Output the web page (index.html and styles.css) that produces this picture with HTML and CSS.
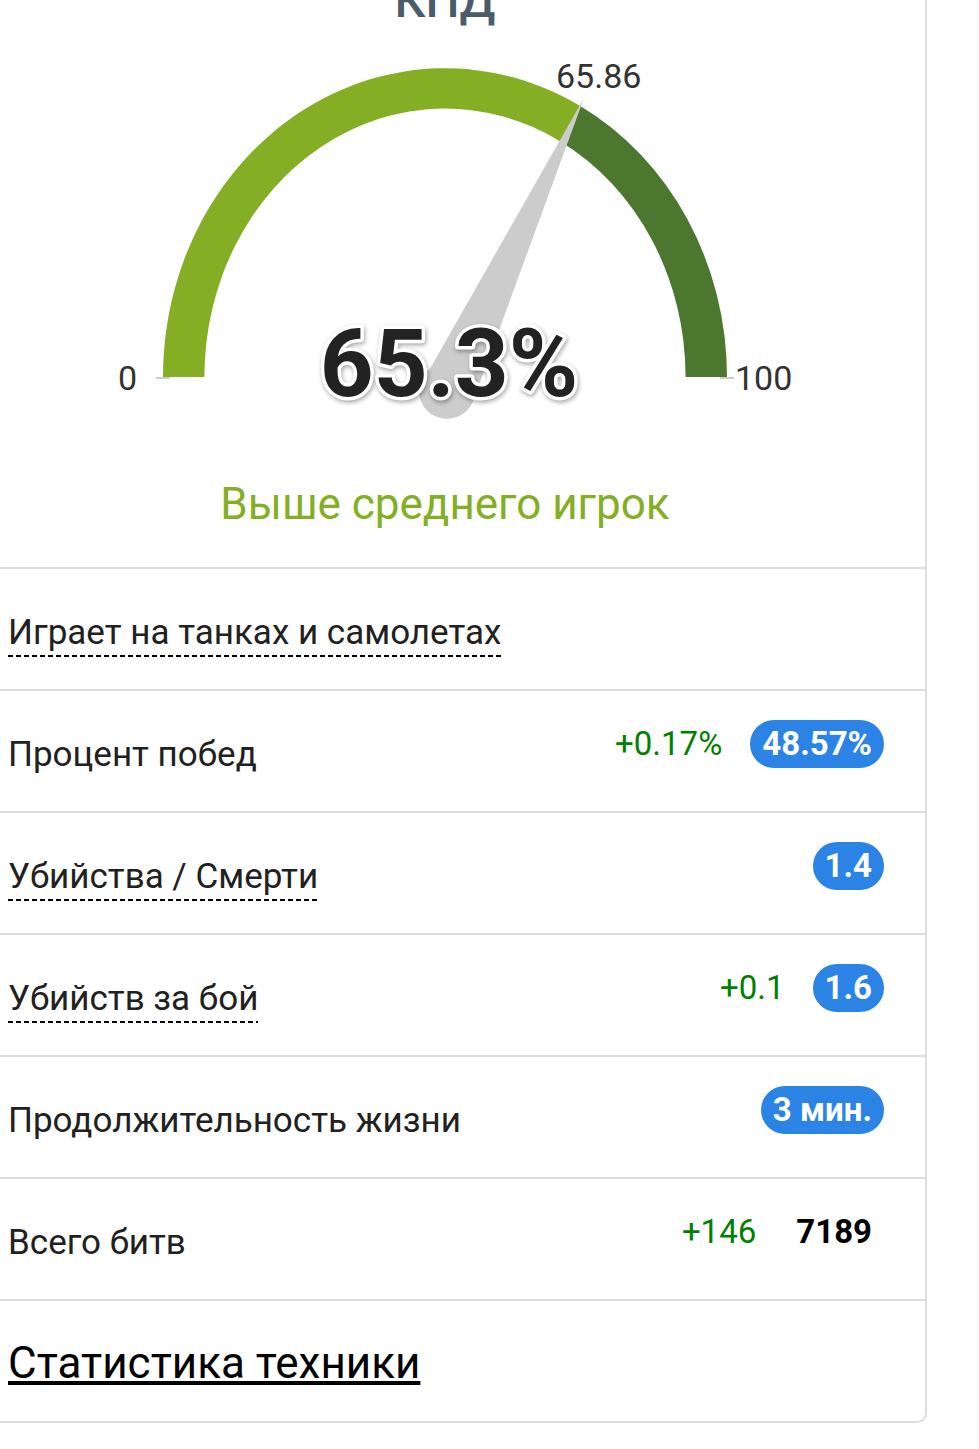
FILE: index.html
```html
<!DOCTYPE html>
<html lang="ru">
<head>
  <meta charset="UTF-8">
  <meta name="viewport" content="width=device-width, initial-scale=1">
  <title>КПД игрока</title>
  <link rel="stylesheet" href="styles.css">
</head>
<body>
  <div class="card">
    <div class="gauge-block">
      <h2 class="gauge-title">КПД</h2>
      <!-- спидометр: координаты в пикселях страницы -->
      <svg class="gauge-chart" viewBox="0 25 890 417" width="890" height="417">
        <line class="gauge-tick" x1="156" y1="378" x2="170" y2="378"></line>
        <line class="gauge-tick" x1="720" y1="378" x2="734" y2="378"></line>
        <path class="band-light" d="M 163 377 A 282 308.7 0 0 1 579.8 105.8 L 560 141.2 A 240.6 268.4 0 0 0 204.4 377 Z"></path>
        <path class="band-dark" d="M 579.8 105.8 A 282 308.7 0 0 1 727 377 L 685.6 377 A 240.6 268.4 0 0 0 560 141.2 Z"></path>
        <circle class="needle" cx="447" cy="391" r="28"></circle>
        <polygon class="needle" points="419,388 476,393 584,98"></polygon>
        <text class="gauge-label" x="137" y="390" text-anchor="end">0</text>
        <text class="gauge-label" x="735" y="390">100</text>
        <text class="gauge-label" x="556" y="88">65.86</text>
        <text class="gauge-value" x="449" y="396" text-anchor="middle">65.3%</text>
      </svg>
      <div class="gauge-status">Выше среднего игрок</div>
    </div>

    <div class="stat-row">
      <span class="stat-label dotted">Играет на танках и самолетах</span>
    </div>
    <div class="stat-row">
      <span class="stat-label">Процент побед</span>
      <div class="stat-values">
        <span class="delta">+0.17%</span>
        <span class="badge">48.57%</span>
      </div>
    </div>
    <div class="stat-row">
      <span class="stat-label dotted">Убийства / Смерти</span>
      <div class="stat-values">
        <span class="badge">1.4</span>
      </div>
    </div>
    <div class="stat-row">
      <span class="stat-label dotted">Убийств за бой</span>
      <div class="stat-values">
        <span class="delta">+0.1</span>
        <span class="badge">1.6</span>
      </div>
    </div>
    <div class="stat-row">
      <span class="stat-label">Продолжительность жизни</span>
      <div class="stat-values">
        <span class="badge">3 мин.</span>
      </div>
    </div>
    <div class="stat-row">
      <span class="stat-label">Всего битв</span>
      <div class="stat-values">
        <span class="delta">+146</span>
        <span class="badge plain">7189</span>
      </div>
    </div>
    <div class="stat-row last">
      <a class="stat-link" href="#">Статистика техники</a>
    </div>
  </div>
</body>
</html>
```

FILE: styles.css
```css
* {
  margin: 0;
  padding: 0;
  box-sizing: border-box;
}
body {
  background: #fff;
  color: #212121;
  font-family: Roboto, "Noto Sans", sans-serif;
}
.card {
  width: 927px;
  border-right: 2px solid #ddd;
  border-bottom: 2px solid #ddd;
  border-bottom-right-radius: 10px;
}
/* блок со спидометром */
.gauge-block {
  padding-right: 35px;
  text-align: center;
  border-bottom: 2px solid #ddd;
}
.gauge-title {
  margin-top: -23px;
  font-size: 48px;
  line-height: 48px;
  font-weight: 500;
  color: #4a5b69;
}
.gauge-chart {
  display: block;
}
.gauge-tick {
  stroke: #ccc;
  stroke-width: 2;
}
.band-light {
  fill: #84ae24;
}
.band-dark {
  fill: #4b772e;
}
.needle {
  fill: #ccc;
}
.gauge-label {
  font-size: 34px;
  fill: #333;
}
.gauge-value {
  font-size: 94px;
  font-weight: 700;
  fill: #222;
  stroke: #fff;
  stroke-width: 7px;
  stroke-linejoin: round;
  paint-order: stroke;
  filter: drop-shadow(1px 2px 2px rgba(0,0,0,0.35));
}
.gauge-status {
  padding: 36px 0 37px;
  font-size: 44px;
  line-height: 52px;
  color: #84ae24;
}
/* строки статистики */
.stat-row {
  display: flex;
  justify-content: space-between;
  align-items: flex-start;
  height: 122px;
  padding: 0 41px 0 8px;
  border-bottom: 2px solid #ddd;
}
.stat-row.last {
  height: 120px;
  border-bottom: none;
}
.stat-label {
  margin-top: 44px;
  font-size: 35px;
  line-height: 40px;
}
.stat-label.dotted {
  padding-bottom: 4px;
  background: linear-gradient(to right, #000 5px, transparent 5px) repeat-x 0 100% / 8px 2px;
}
.stat-values {
  display: flex;
  align-items: baseline;
  gap: 28px;
  margin-top: 29px;
}
.delta {
  font-size: 33px;
  line-height: 48px;
  color: #008000;
}
.badge {
  padding: 0 12px;
  border-radius: 24px;
  background: #2a83e5;
  color: #fff;
  font-size: 33px;
  font-weight: 700;
  line-height: 48px;
}
.badge.plain {
  background: none;
  color: #000;
}
.stat-link {
  margin-top: 36px;
  font-size: 44px;
  line-height: 52px;
  color: #000;
  text-decoration: underline;
  text-decoration-thickness: 4px;
  text-underline-offset: 3px;
}
```
